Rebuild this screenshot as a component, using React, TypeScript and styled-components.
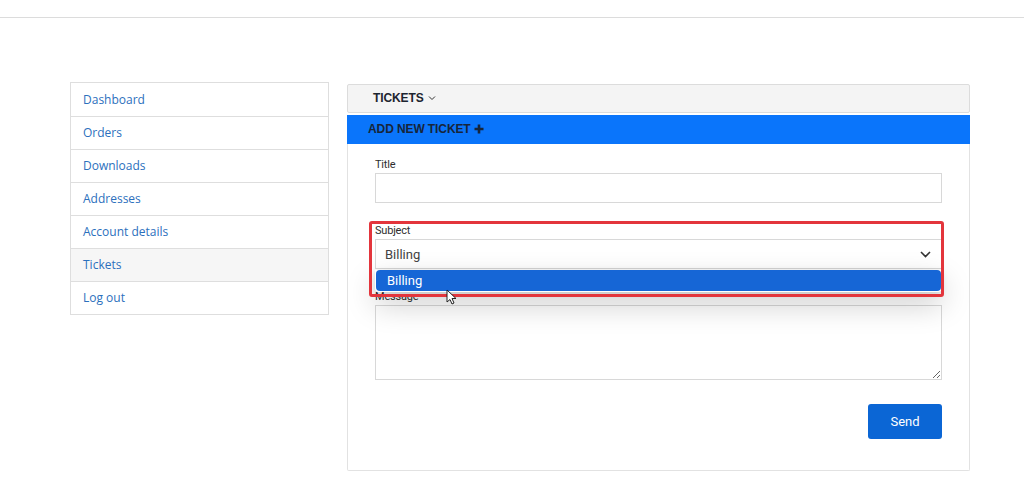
import React from "react";
import styled, { createGlobalStyle } from "styled-components";

const Global = createGlobalStyle`
  html, body { margin: 0; padding: 0; background: #ffffff; }
  body { font-family: "Liberation Sans", Arial, sans-serif; }
  * { box-sizing: border-box; }
`;

const Page = styled.div`
  width: 1024px;
  height: 486px;
  overflow: hidden;
  background: #fff;
`;

const TopBar = styled.div`
  height: 18px;
  border-bottom: 1px solid #dcdcdc;
  background: #fff;
`;

const Content = styled.div`
  display: flex;
  align-items: flex-start;
  gap: 18px;
  padding-left: 70px;
  margin-top: 64px;
`;

const SideNav = styled.nav`
  width: 259px;
  border: 1px solid #dedede;
  display: flex;
  flex-direction: column;
`;

const NavItem = styled.a<{ $active?: boolean }>`
  height: 33px;
  display: flex;
  align-items: center;
  padding-left: 12px;
  padding-bottom: 1px;
  font-family: "Open Sans", "Noto Sans", sans-serif;
  font-size: 12px;
  color: #2c70bd;
  text-decoration: none;
  background: ${(p) => (p.$active ? "#f6f6f6" : "#fff")};
  & + & { border-top: 1px solid #dedede; }
`;

const Main = styled.section`
  width: 623px;
  margin-top: 2px;
  display: flex;
  flex-direction: column;
`;

const TabHeader = styled.div`
  height: 29px;
  border: 1px solid #dcdcdc;
  border-radius: 2px;
  background: #f4f4f4;
  display: flex;
  align-items: center;
  gap: 4px;
  padding-left: 25px;
  padding-bottom: 2px;
  font-size: 12px;
  font-weight: 700;
  color: #1d2530;
  letter-spacing: -0.1px;
`;

const AddBar = styled.div`
  margin-top: 2px;
  height: 29px;
  background: #0a75fb;
  display: flex;
  align-items: center;
  gap: 3px;
  padding-left: 21px;
  padding-bottom: 2px;
  font-size: 12px;
  font-weight: 700;
  color: #17253a;
  letter-spacing: -0.1px;
`;

const FormPanel = styled.form`
  border: 1px solid #e2e2e2;
  border-top: none;
  border-radius: 0 0 2px 2px;
  padding: 14px 27px 31px 27px;
  display: flex;
  flex-direction: column;
  gap: 21px;
`;

const Field = styled.div`
  position: relative;
  display: flex;
  flex-direction: column;
`;

const Label = styled.label`
  font-family: Roboto, "Liberation Sans", sans-serif;
  font-size: 11px;
  line-height: 14px;
  color: #2e2e2e;
  margin-bottom: 1px;
  letter-spacing: -0.2px;
`;

const TextInput = styled.div`
  height: 30px;
  border: 1px solid #d8d8d8;
  background: #fff;
`;

const SelectBox = styled.div`
  height: 30px;
  border: 1px solid #d8d8d8;
  background: #fff;
  display: flex;
  align-items: center;
  justify-content: space-between;
  padding: 0 10px 0 9px;
  font-family: Roboto, "Liberation Sans", sans-serif;
  font-size: 13px;
  color: #444;
`;

const Dropdown = styled.div`
  position: absolute;
  left: 0;
  right: 0;
  top: 100%;
  margin-top: 1px;
  background: #fff;
  padding: 0 1px 1px;
  box-shadow: 0 12px 30px rgba(0, 0, 0, 0.22), 0 2px 6px rgba(0, 0, 0, 0.12);
  border-radius: 0 0 4px 4px;
  z-index: 5;
`;

const Option = styled.div<{ $selected?: boolean }>`
  height: 21px;
  border-radius: 4px;
  background: ${(p) => (p.$selected ? "#1666d6" : "#fff")};
  color: ${(p) => (p.$selected ? "#fff" : "#333")};
  display: flex;
  align-items: center;
  padding-left: 11px;
  font-family: Roboto, "Liberation Sans", sans-serif;
  font-size: 13px;
`;

const Highlight = styled.div`
  position: absolute;
  left: -6px;
  right: -2px;
  top: -3px;
  bottom: -28px;
  border: 3px solid #e3353c;
  border-radius: 3px;
  pointer-events: none;
  z-index: 6;
`;

const Cursor = styled.svg`
  position: absolute;
  left: 71px;
  top: 65px;
  z-index: 7;
`;

const TextArea = styled.textarea`
  height: 75px;
  border: 1px solid #d8d8d8;
  background: #fff;
  resize: vertical;
  outline: none;
  font: inherit;
`;

const Actions = styled.div`
  display: flex;
  justify-content: flex-end;
  margin-top: 3px;
`;

const SendButton = styled.button`
  width: 74px;
  height: 35px;
  border: none;
  border-radius: 3px;
  background: #0b66d5;
  color: #fff;
  font-family: Roboto, "Liberation Sans", sans-serif;
  font-size: 13px;
  cursor: pointer;
`;

const navItems = ["Dashboard", "Orders", "Downloads", "Addresses", "Account details", "Tickets", "Log out"];

export default function App() {
  return (
    <Page>
      <Global />
      <TopBar />
      <Content>
        <SideNav>
          {navItems.map((n) => (
            <NavItem key={n} $active={n === "Tickets"}>
              {n}
            </NavItem>
          ))}
        </SideNav>
        <Main>
          <TabHeader>
            TICKETS
            <svg width="8" height="6" viewBox="0 0 8 6">
              <path d="M1 1.5 L4 4.5 L7 1.5" fill="none" stroke="#333" strokeWidth="1" />
            </svg>
          </TabHeader>
          <AddBar>
            ADD NEW TICKET
            <svg width="10" height="10" viewBox="0 0 10 10">
              <path d="M5 0.5 V9.5 M0.5 5 H9.5" stroke="#17253a" strokeWidth="2.6" />
            </svg>
          </AddBar>
          <FormPanel onSubmit={(e) => e.preventDefault()}>
            <Field>
              <Label>Title</Label>
              <TextInput />
            </Field>
            <Field>
              <Label>Subject</Label>
              <SelectBox>
                Billing
                <svg width="11" height="7" viewBox="0 0 11 7">
                  <path d="M1 1 L5.5 5.5 L10 1" fill="none" stroke="#333" strokeWidth="1.6" />
                </svg>
              </SelectBox>
              <Dropdown>
                <Option $selected>Billing</Option>
              </Dropdown>
              <Highlight />
              <Cursor width="11" height="16" viewBox="0 0 11 16">
                <path d="M1 1 L1 13 L4 10.5 L6 15 L8 14 L6 9.5 L10 9.5 Z" fill="#fff" stroke="#222" strokeWidth="1" />
              </Cursor>
            </Field>
            <Field>
              <Label>Message</Label>
              <TextArea />
            </Field>
            <Actions>
              <SendButton type="submit">Send</SendButton>
            </Actions>
          </FormPanel>
        </Main>
      </Content>
    </Page>
  );
}
